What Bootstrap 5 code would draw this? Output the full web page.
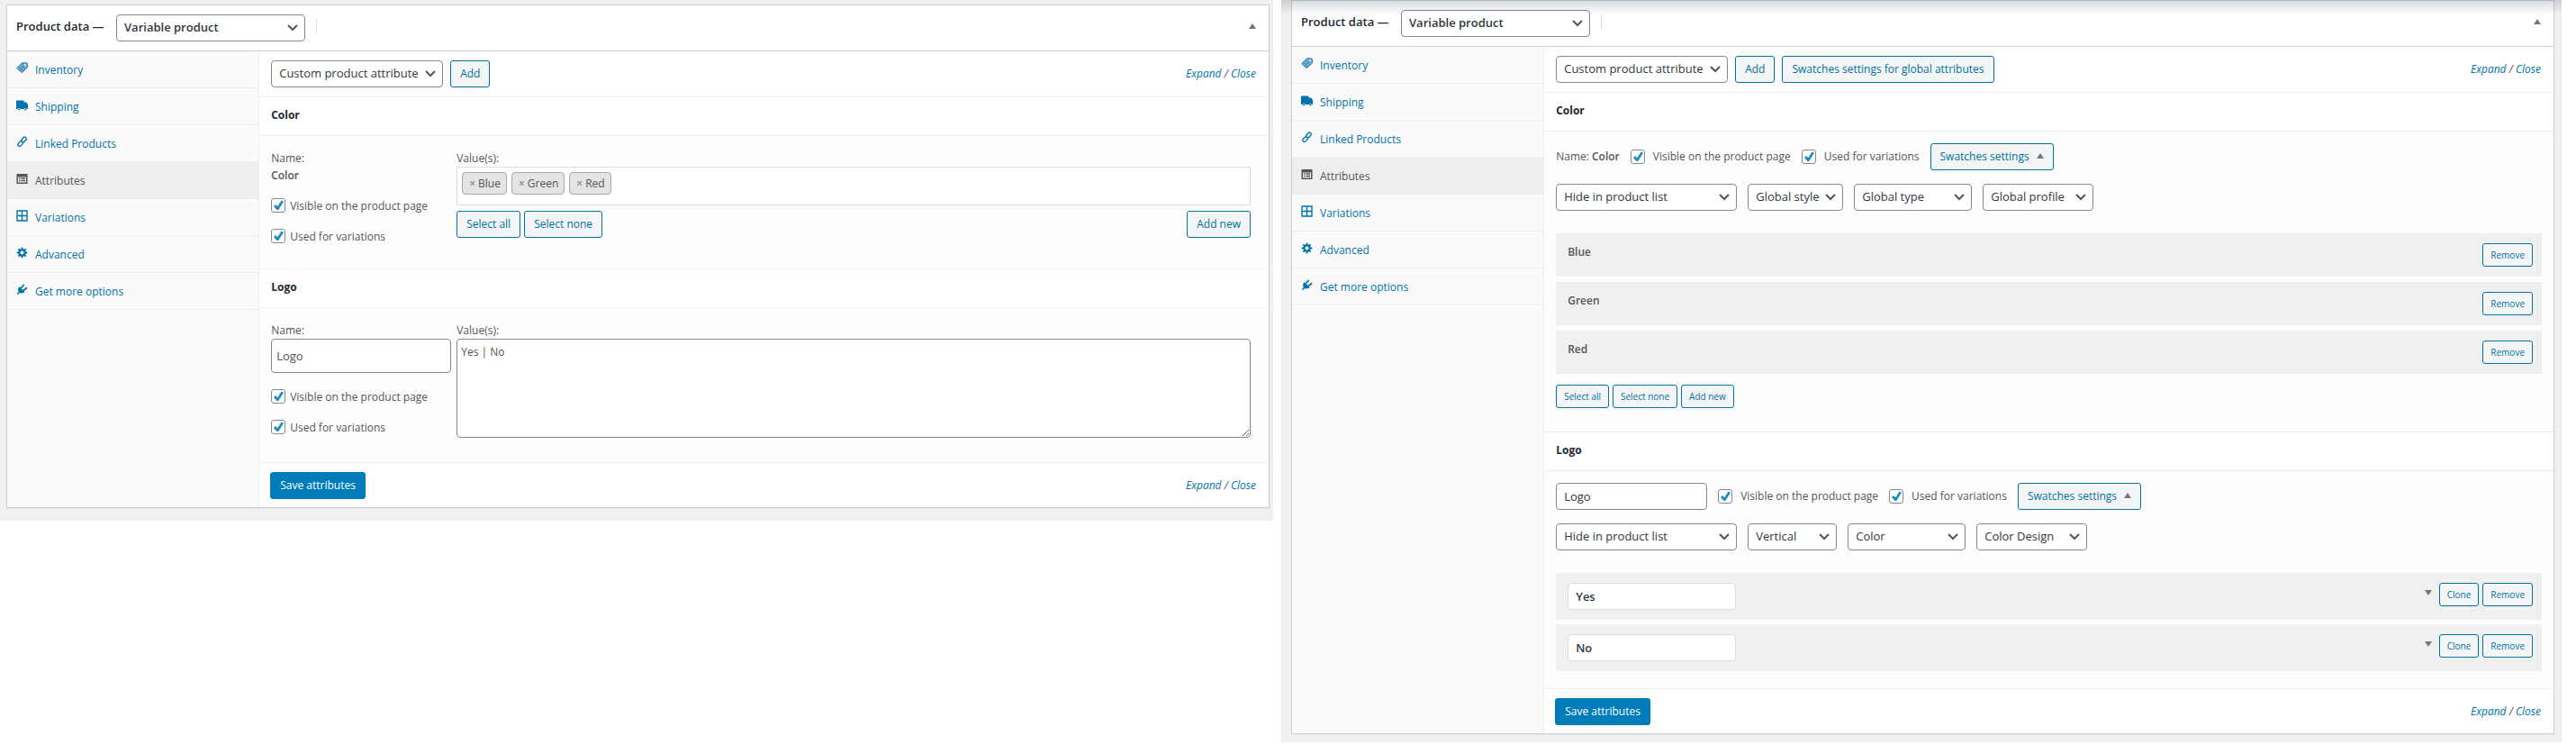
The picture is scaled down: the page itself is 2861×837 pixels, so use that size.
<!DOCTYPE html>
<html lang="en">
<head>
<meta charset="utf-8">
<meta name="viewport" content="width=device-width, initial-scale=1">
<title>Product data</title>
<link href="https://cdn.jsdelivr.net/npm/bootstrap@5.3.0/dist/css/bootstrap.min.css" rel="stylesheet">
<style>
  body { font-family: "Open Sans", "Noto Sans", sans-serif; font-size: 12px; line-height: 20px; color: #555; background: #fff; }
  a { color: #0073aa; text-decoration: none; }
  .screens { display: grid; grid-template-columns: 1414fr 1422fr; column-gap: 9px; padding-right: 16px; align-items: start; }
  .screen { background: #f0f0f0; padding: 5px 4px 14px 7px; }
  .screen-scrolled { padding: 0 8px 9px 11px; position: relative; }
  .screen-scrolled::before { content: ""; position: absolute; inset: 0 0 auto 0; height: 16px; background: linear-gradient(rgba(60, 67, 90, .2), rgba(60, 67, 90, 0)); pointer-events: none; }
  .postbox { background: #fff; border: 1px solid #ccd0d4; box-shadow: 0 1px 1px rgba(0, 0, 0, .04); }
  .box-head { height: 51px; padding: 0 14px 0 10px; border-bottom: 1px solid #ccd0d4; color: #23282d; font-size: 13px; font-weight: 600; }
  .box-head label { width: 111px; padding-bottom: 4px; }
  .box-head .tri { margin-bottom: 4px; }
  .box-head .divider { width: 1px; height: 16px; background: #ddd; margin: 0 0 4px 12px; }
  .side { flex: 0 0 20%; background: #fafafa; border-right: 1px solid #eee; }
  .side a { display: flex; align-items: center; gap: 8px; height: 41px; padding: 2px 10px 0; border-bottom: 1px solid #eee; }
  .side a svg { width: 13px; height: 13px; margin-bottom: 5px; flex: none; }
  .side a.active { background: #eee; color: #555; }
  .bar { padding: 0 14px 0 13px; }
  .bar-top { height: 51px; border-bottom: 1px solid #eee; }
  .bar-end { height: 49px; padding-left: 12px; }
  .attr-title { margin: 0; height: 43px; padding: 0 13px; border-bottom: 1px solid #eee; font-size: 12px; font-weight: 700; line-height: 40px; color: #23282d; }
  .attr-body { background: #fdfdfd; border-bottom: 1px solid #eee; }
  .form-select, .form-control { font-size: 13px; line-height: 20px; color: #32373c; border: 1px solid #7e8993; border-radius: 4px; background-color: #fff; min-height: 30px; }
  .form-select { height: 30px; padding: 0 24px 2px 8px; background-image: url("data:image/svg+xml,%3Csvg xmlns='http://www.w3.org/2000/svg' viewBox='0 0 12 8'%3E%3Cpath d='M1 1l5 5 5-5' fill='none' stroke='%23555' stroke-width='2'/%3E%3C/svg%3E"); background-size: 12px 8px; background-position: right 7px center; }
  .w-type { width: 210px; font-weight: 600; }
  .w-attr { width: 191px; }
  .w-list { width: 201px; }
  .w-style { width: 106px; }
  .w-layout { width: 99px; }
  .w-kind { width: 131px; }
  .w-profile { width: 123px; }
  .btn-wp { font-size: 12px; line-height: 26px; height: 30px; padding: 0 10px; color: #0071a1; background: #f3f5f6; border: 1px solid #0071a1; border-radius: 3px; white-space: nowrap; --bs-btn-hover-color: #0071a1; }
  .btn-mini { font-size: 10px; line-height: 24px; height: 26px; padding: 0 8px; }
  .btn-save { color: #fff; background: #007cba; border-color: #007cba; }
  .form-check-input { width: 16px; height: 16px; margin: 0; flex: none; border: 1px solid #7e8993; border-radius: 4px; background-color: #fff; }
  .form-check-input:checked { background-color: #fff; border-color: #7e8993; background-image: url("data:image/svg+xml,%3Csvg xmlns='http://www.w3.org/2000/svg' viewBox='0 0 16 16'%3E%3Cpath d='M3 9l2-2 2.300 2.300L11.500 2.500 14 3.800 8.200 13H6.500z' fill='%231e8cbe'/%3E%3C/svg%3E"); background-size: 16px; }
  .fields { display: grid; grid-template-columns: 200px 1fr; column-gap: 6px; padding: 15px 20px 27px 13px; line-height: 19px; }
  .ticks { display: grid; gap: 18px; margin-top: 16px; }
  .field-name + .ticks { margin-top: 18px; }
  .tick { display: flex; align-items: center; gap: 5px; height: 16px; }
  .tick-wide { gap: 9px; }
  .name-ink { font-weight: 600; }
  .tags { height: 43px; background: #fff; border: 1px solid #ddd; padding: 5px; gap: 5px; }
  .tag { height: 25px; line-height: 23px; padding: 0 6px 0 7px; background: #e4e4e4; border: 1px solid #aaa; border-radius: 4px; }
  .tag button { border: 0; background: none; padding: 0; margin-right: 3px; color: #999; font-weight: 700; }
  .value-tools { margin-top: 6px; padding-bottom: 7px; }
  .field-name { height: 38px; padding: 0 5px; color: #555; }
  .field-values { height: 110px; padding: 3px 4px; color: #555; font-size: 12px; line-height: 22px; resize: vertical; }
  .in-logo { width: 168px; height: 30px; padding: 2px 8px; }
  .swatches { padding: 13px 20px 19px 13px; }
  .row-opts { gap: 12px; }
  .row-opts .tri { margin: 0 0 3px 8px; }
  .row-selects { gap: 12px; margin-top: 15px; }
  .term-tools { margin: 12px 0 7px; }
  .terms { display: grid; gap: 6px; margin: 25px -7px 0 0; }
  .terms-tall { gap: 5px; }
  .term { background: #f0f0f0; padding: 11px 10px 0 13px; height: 48px; line-height: 20px; font-weight: 600; }
  .term-tall { height: 52px; }
  .in-term { width: 187px; height: 30px; padding: 0 8px; border-color: #ddd; font-weight: 600; }
  .tri { width: 0; height: 0; border: 4px solid transparent; border-top-width: 0; border-bottom: 6px solid #72777c; flex: none; display: inline-block; }
  .term .tri { border-top: 6px solid #72777c; border-bottom-width: 0; margin: 8px 8px 0 0; }
</style>
</head>
<body>
<svg class="d-none" xmlns="http://www.w3.org/2000/svg">
  <symbol id="i-tag" viewBox="0 0 13 13"><path d="M6.500.8l5.600.200.4 4.700-6.200 6L.7 6.700z" fill="#79add0" stroke="#1279ad"/><path d="M3.500 5.500l4 4M5.500 3.500l4 4M4 9l5-5M8.500 2l2 2" stroke="#1279ad" stroke-width=".7"/><circle cx="10" cy="3" r="1" fill="#fff"/></symbol>
  <symbol id="i-truck" viewBox="0 0 13 13"><path d="M0 1.500h8.500v2h2.800L13 6v5h-1.200a1.600 1.600 0 0 0-3 0H4.600a1.600 1.600 0 0 0-3 0H0z" fill="currentColor"/><circle cx="3.100" cy="11.500" r="1" fill="currentColor"/><circle cx="10.300" cy="11.500" r="1" fill="currentColor"/></symbol>
  <symbol id="i-link" viewBox="0 0 13 13"><g fill="none" stroke="currentColor" stroke-width="1.300"><rect x="-3.200" y="-1.900" width="6.400" height="3.800" rx="1.900" transform="translate(8.500 4) rotate(-48)"/><rect x="-3.200" y="-1.900" width="6.400" height="3.800" rx="1.900" transform="translate(4.600 8.600) rotate(-48)"/></g></symbol>
  <symbol id="i-form" viewBox="0 0 13 13"><path d="M.5 1h12v11H.5z" fill="currentColor"/><path d="M2 4.500h9v6H2z" fill="#eee"/><path d="M3 6h1.500M3 8.500h1.500M5.500 6H10M5.500 8.500H10" stroke="currentColor" stroke-width="1.400"/></symbol>
  <symbol id="i-grid" viewBox="0 0 13 13"><path d="M1 1h11v11H1zM6.500 1v11M1 6.500h11" fill="none" stroke="currentColor" stroke-width="1.400"/></symbol>
  <symbol id="i-gear" viewBox="0 0 13 13"><circle cx="6.500" cy="6.500" r="3.100" fill="none" stroke="currentColor" stroke-width="2.200"/><path d="M6.500.7v2.300M6.500 10v2.300M.7 6.500H3M10 6.500h2.300M2.400 2.400L4 4M9 9l1.600 1.600M10.600 2.400L9 4M4 9l-1.600 1.600" stroke="currentColor" stroke-width="2"/></symbol>
  <symbol id="i-plug" viewBox="0 0 13 13"><path d="M3.500 3.200l6 5.800c-1.500 1.600-3.800 1.800-5.300.9L1.500 12.200.8 11.500l2-2.700C1.600 7 2 4.700 3.500 3.200z" fill="currentColor"/><path d="M5.500 4.500l2.800-3M8.300 7.300l3.200-2.600" stroke="currentColor" stroke-width="1.800" stroke-linecap="round"/></symbol>
</svg>

<main class="screens">
  <section class="screen">
    <div class="postbox">
      <header class="box-head d-flex align-items-center">
        <label for="type1">Product data —</label>
        <select id="type1" class="form-select w-type"><option>Variable product</option></select>
        <span class="divider"></span>
        <span class="tri ms-auto"></span>
      </header>
      <div class="d-flex">
        <nav class="side">
          <a href="#"><svg><use href="#i-tag"/></svg>Inventory</a>
          <a href="#"><svg><use href="#i-truck"/></svg>Shipping</a>
          <a href="#"><svg><use href="#i-link"/></svg>Linked Products</a>
          <a href="#" class="active"><svg><use href="#i-form"/></svg>Attributes</a>
          <a href="#"><svg><use href="#i-grid"/></svg>Variations</a>
          <a href="#"><svg><use href="#i-gear"/></svg>Advanced</a>
          <a href="#"><svg><use href="#i-plug"/></svg>Get more options</a>
        </nav>
        <div class="flex-grow-1">
          <div class="bar bar-top d-flex align-items-center">
            <select class="form-select w-attr" aria-label="Attribute"><option>Custom product attribute</option></select>
            <button type="button" class="btn btn-wp ms-2">Add</button>
            <span class="ms-auto fst-italic"><a href="#">Expand</a> / <a href="#">Close</a></span>
          </div>
          <h3 class="attr-title">Color</h3>
          <div class="attr-body fields">
            <div>
              <div>Name:</div>
              <div class="name-ink">Color</div>
              <div class="ticks">
                <label class="tick"><input type="checkbox" class="form-check-input" checked>Visible on the product page</label>
                <label class="tick"><input type="checkbox" class="form-check-input" checked>Used for variations</label>
              </div>
            </div>
            <div>
              <div>Value(s):</div>
              <div class="tags d-flex">
                <span class="tag"><button type="button" aria-label="Remove Blue">×</button>Blue</span>
                <span class="tag"><button type="button" aria-label="Remove Green">×</button>Green</span>
                <span class="tag"><button type="button" aria-label="Remove Red">×</button>Red</span>
              </div>
              <div class="d-flex gap-1 value-tools">
                <button type="button" class="btn btn-wp">Select all</button>
                <button type="button" class="btn btn-wp">Select none</button>
                <button type="button" class="btn btn-wp ms-auto">Add new</button>
              </div>
            </div>
          </div>
          <h3 class="attr-title">Logo</h3>
          <div class="attr-body fields">
            <div>
              <label for="name1" class="d-block">Name:</label>
              <input id="name1" type="text" class="form-control field-name" value="Logo">
              <div class="ticks">
                <label class="tick"><input type="checkbox" class="form-check-input" checked>Visible on the product page</label>
                <label class="tick"><input type="checkbox" class="form-check-input" checked>Used for variations</label>
              </div>
            </div>
            <div>
              <label for="values1" class="d-block">Value(s):</label>
              <textarea id="values1" class="form-control field-values">Yes | No</textarea>
            </div>
          </div>
          <div class="bar bar-end d-flex align-items-center">
            <button type="button" class="btn btn-wp btn-save">Save attributes</button>
            <span class="ms-auto fst-italic"><a href="#">Expand</a> / <a href="#">Close</a></span>
          </div>
        </div>
      </div>
    </div>
  </section>

  <section class="screen screen-scrolled">
    <div class="postbox">
      <header class="box-head d-flex align-items-center">
        <label for="type2">Product data —</label>
        <select id="type2" class="form-select w-type"><option>Variable product</option></select>
        <span class="divider"></span>
        <span class="tri ms-auto"></span>
      </header>
      <div class="d-flex">
        <nav class="side">
          <a href="#"><svg><use href="#i-tag"/></svg>Inventory</a>
          <a href="#"><svg><use href="#i-truck"/></svg>Shipping</a>
          <a href="#"><svg><use href="#i-link"/></svg>Linked Products</a>
          <a href="#" class="active"><svg><use href="#i-form"/></svg>Attributes</a>
          <a href="#"><svg><use href="#i-grid"/></svg>Variations</a>
          <a href="#"><svg><use href="#i-gear"/></svg>Advanced</a>
          <a href="#"><svg><use href="#i-plug"/></svg>Get more options</a>
        </nav>
        <div class="flex-grow-1">
          <div class="bar bar-top d-flex align-items-center">
            <select class="form-select w-attr" aria-label="Attribute"><option>Custom product attribute</option></select>
            <button type="button" class="btn btn-wp ms-2">Add</button>
            <button type="button" class="btn btn-wp ms-2">Swatches settings for global attributes</button>
            <span class="ms-auto fst-italic"><a href="#">Expand</a> / <a href="#">Close</a></span>
          </div>
          <h3 class="attr-title">Color</h3>
          <div class="attr-body swatches">
            <div class="d-flex align-items-center row-opts">
              <span>Name: <span class="name-ink">Color</span></span>
              <label class="tick tick-wide"><input type="checkbox" class="form-check-input" checked>Visible on the product page</label>
              <label class="tick tick-wide"><input type="checkbox" class="form-check-input" checked>Used for variations</label>
              <button type="button" class="btn btn-wp">Swatches settings<span class="tri align-middle"></span></button>
            </div>
            <div class="d-flex row-selects">
              <select class="form-select w-list" aria-label="List display"><option>Hide in product list</option></select>
              <select class="form-select w-style" aria-label="Style"><option>Global style</option></select>
              <select class="form-select w-kind" aria-label="Type"><option>Global type</option></select>
              <select class="form-select w-profile" aria-label="Profile"><option>Global profile</option></select>
            </div>
            <div class="terms">
              <div class="term d-flex justify-content-between align-items-start">Blue<button type="button" class="btn btn-wp btn-mini">Remove</button></div>
              <div class="term d-flex justify-content-between align-items-start">Green<button type="button" class="btn btn-wp btn-mini">Remove</button></div>
              <div class="term d-flex justify-content-between align-items-start">Red<button type="button" class="btn btn-wp btn-mini">Remove</button></div>
            </div>
            <div class="d-flex gap-1 term-tools">
              <button type="button" class="btn btn-wp btn-mini">Select all</button>
              <button type="button" class="btn btn-wp btn-mini">Select none</button>
              <button type="button" class="btn btn-wp btn-mini">Add new</button>
            </div>
          </div>
          <h3 class="attr-title">Logo</h3>
          <div class="attr-body swatches">
            <div class="d-flex align-items-center row-opts">
              <input type="text" class="form-control in-logo" value="Logo" aria-label="Name">
              <label class="tick tick-wide"><input type="checkbox" class="form-check-input" checked>Visible on the product page</label>
              <label class="tick tick-wide"><input type="checkbox" class="form-check-input" checked>Used for variations</label>
              <button type="button" class="btn btn-wp">Swatches settings<span class="tri align-middle"></span></button>
            </div>
            <div class="d-flex row-selects">
              <select class="form-select w-list" aria-label="List display"><option>Hide in product list</option></select>
              <select class="form-select w-layout" aria-label="Style"><option>Vertical</option></select>
              <select class="form-select w-kind" aria-label="Type"><option>Color</option></select>
              <select class="form-select w-profile" aria-label="Profile"><option>Color Design</option></select>
            </div>
            <div class="terms terms-tall">
              <div class="term term-tall d-flex align-items-start">
                <input type="text" class="form-control in-term" value="Yes" aria-label="Term">
                <span class="tri ms-auto"></span>
                <button type="button" class="btn btn-wp btn-mini me-1">Clone</button>
                <button type="button" class="btn btn-wp btn-mini">Remove</button>
              </div>
              <div class="term term-tall d-flex align-items-start">
                <input type="text" class="form-control in-term" value="No" aria-label="Term">
                <span class="tri ms-auto"></span>
                <button type="button" class="btn btn-wp btn-mini me-1">Clone</button>
                <button type="button" class="btn btn-wp btn-mini">Remove</button>
              </div>
            </div>
          </div>
          <div class="bar bar-end d-flex align-items-center">
            <button type="button" class="btn btn-wp btn-save">Save attributes</button>
            <span class="ms-auto fst-italic"><a href="#">Expand</a> / <a href="#">Close</a></span>
          </div>
        </div>
      </div>
    </div>
  </section>
</main>
<script src="https://cdn.jsdelivr.net/npm/bootstrap@5.3.0/dist/js/bootstrap.bundle.min.js"></script>
</body>
</html>
